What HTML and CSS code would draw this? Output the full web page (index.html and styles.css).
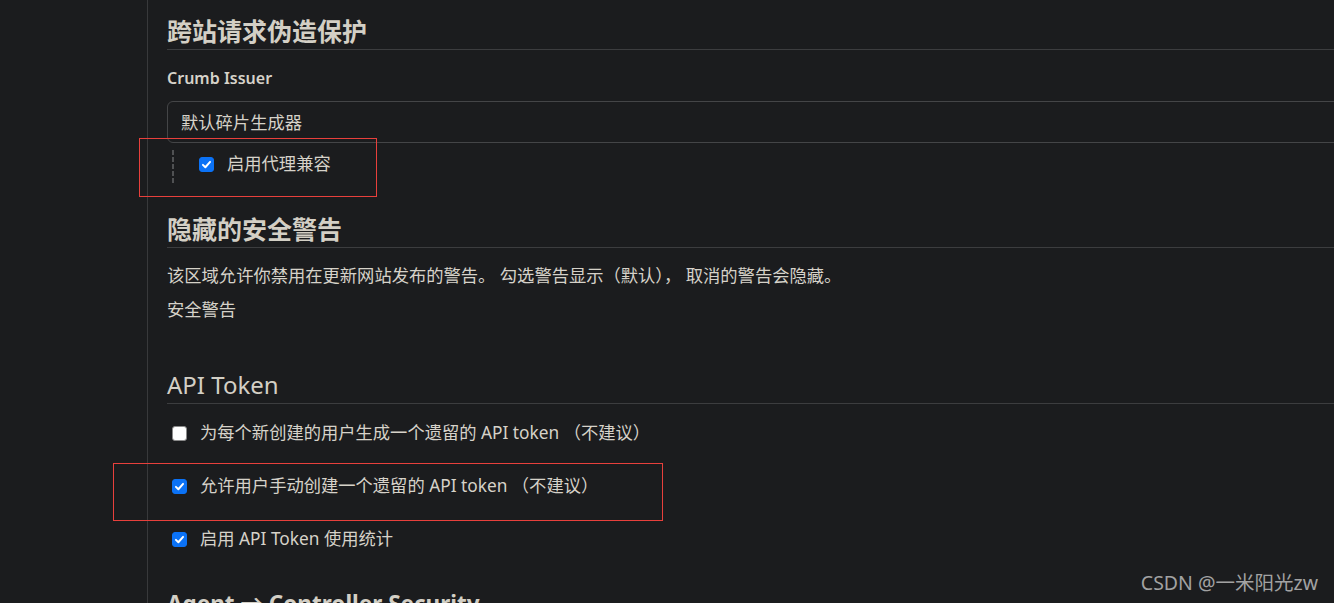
FILE: index.html
```html
<!DOCTYPE html>
<html lang="zh-CN">
<head>
    <meta charset="UTF-8">
    <meta name="viewport" content="width=device-width, initial-scale=1.0">
    <title>全局安全配置</title>
    <link rel="stylesheet" href="styles.css">
</head>
<body>

    <div class="page">
        <div class="side"></div>

        <main class="content">
            <section class="section">
                <h2 class="section-title cjk">跨站请求伪造保护</h2>
                <div class="field-label">Crumb Issuer</div>
                <div class="select">默认碎片生成器</div>
                <div class="nested">
                    <label class="check">
                        <span class="box on">
                            <svg viewBox="0 0 16 16"><path d="M3.6 8.4l3 3 5.8-6.6"/></svg>
                        </span>
                        启用代理兼容
                    </label>
                </div>
            </section>

            <section class="section warn-section">
                <h2 class="section-title cjk">隐藏的安全警告</h2>
                <p class="desc">该区域允许你禁用在更新网站发布的警告。 勾选警告显示（默认）， 取消的警告会隐藏。</p>
                <p class="sub">安全警告</p>
            </section>

            <section class="section token-section">
                <h2 class="section-title light">API Token</h2>
                <label class="check row">
                    <span class="box"></span>
                    为每个新创建的用户生成一个遗留的 API token （不建议）
                </label>
                <label class="check row">
                    <span class="box on">
                        <svg viewBox="0 0 16 16"><path d="M3.6 8.4l3 3 5.8-6.6"/></svg>
                    </span>
                    允许用户手动创建一个遗留的 API token （不建议）
                </label>
                <label class="check row">
                    <span class="box on">
                        <svg viewBox="0 0 16 16"><path d="M3.6 8.4l3 3 5.8-6.6"/></svg>
                    </span>
                    启用 API Token 使用统计
                </label>
            </section>

            <section class="section agent-section">
                <h2 class="section-title agent">Agent → Controller Security</h2>
            </section>
        </main>

        <!-- annotation boxes drawn over the screenshot -->
        <div class="mark mark-proxy"></div>
        <div class="mark mark-token"></div>

        <div class="watermark">CSDN @一米阳光zw</div>
    </div>

</body>
</html>
```

FILE: styles.css
```css
html, body {
    margin: 0;
    padding: 0;
    height: 603px;
    overflow: hidden;
}
body {
    background-color: #1b1c1e;
    color: #d6d2c9;
    font-family: "Noto Sans", "Noto Sans CJK SC", sans-serif;
    font-size: 16px;
}
.page {
    position: relative;
    display: flex;
    height: 603px;
}
.side {
    width: 147px;
    flex-shrink: 0;
    border-right: 1px solid #38393b;
}
.content {
    flex: 1;
    padding: 14px 0 0 19px;
    min-width: 0;
}
.section-title {
    margin: 0;
    font-size: 24px;
    line-height: 34px;
    font-weight: bold;
    padding-bottom: 1px;
    border-bottom: 1px solid #3c3d3f;
    color: #d3cfc5;
}
.section-title.cjk {
    font-size: 25px;
}
.section-title.light {
    font-weight: normal;
}
.section-title.agent {
    font-size: 22.5px;
}
.field-label {
    margin-top: 16px;
    line-height: 24px;
    font-weight: 600;
}
.select {
    margin-top: 11px;
    margin-right: -10px;
    height: 42px;
    box-sizing: border-box;
    line-height: 42px;
    padding-left: 13px;
    border: 1px solid #444547;
    border-radius: 6px;
    font-size: 17.3px;
}
.nested {
    margin: 7px 0 0 5px;
    padding: 2px 0 8px 27px;
    background: repeating-linear-gradient(#505153 0 5px, transparent 5px 7px) left top / 2px 100% no-repeat;
}
.check {
    display: flex;
    align-items: center;
    line-height: 24px;
    gap: 13px;
    font-size: 17.3px;
}
.box {
    width: 15px;
    height: 15px;
    box-sizing: border-box;
    border-radius: 3px;
    background: #ffffff;
    border: 1px solid #8a8a8a;
    flex-shrink: 0;
    display: flex;
}
.box.on {
    background: #0b72f6;
    border-color: #0b72f6;
}
.box svg {
    width: 13px;
    height: 13px;
    fill: none;
    stroke: #ffffff;
    stroke-width: 2.4;
    stroke-linecap: round;
    stroke-linejoin: round;
}
.warn-section {
    margin-top: 28px;
}
.desc {
    margin: 16px 0 0;
    line-height: 24px;
    font-size: 17.3px;
}
.sub {
    margin: 10px 0 0;
    line-height: 24px;
    font-size: 17.3px;
}
.token-section {
    margin-top: 46px;
}
.row {
    margin-top: 29px;
    padding-left: 5px;
}
.section-title + .row {
    margin-top: 17px;
}
.agent-section {
    margin-top: 36px;
}
.mark {
    position: absolute;
    border: 1px solid #e8403c;
}
.mark-proxy {
    left: 139px;
    top: 138px;
    width: 236px;
    height: 57px;
}
.mark-token {
    left: 113px;
    top: 463px;
    width: 548px;
    height: 56px;
}
.watermark {
    position: absolute;
    right: 16px;
    top: 571px;
    font-size: 19.5px;
    line-height: 24px;
    color: #a2a2a2;
}
```
